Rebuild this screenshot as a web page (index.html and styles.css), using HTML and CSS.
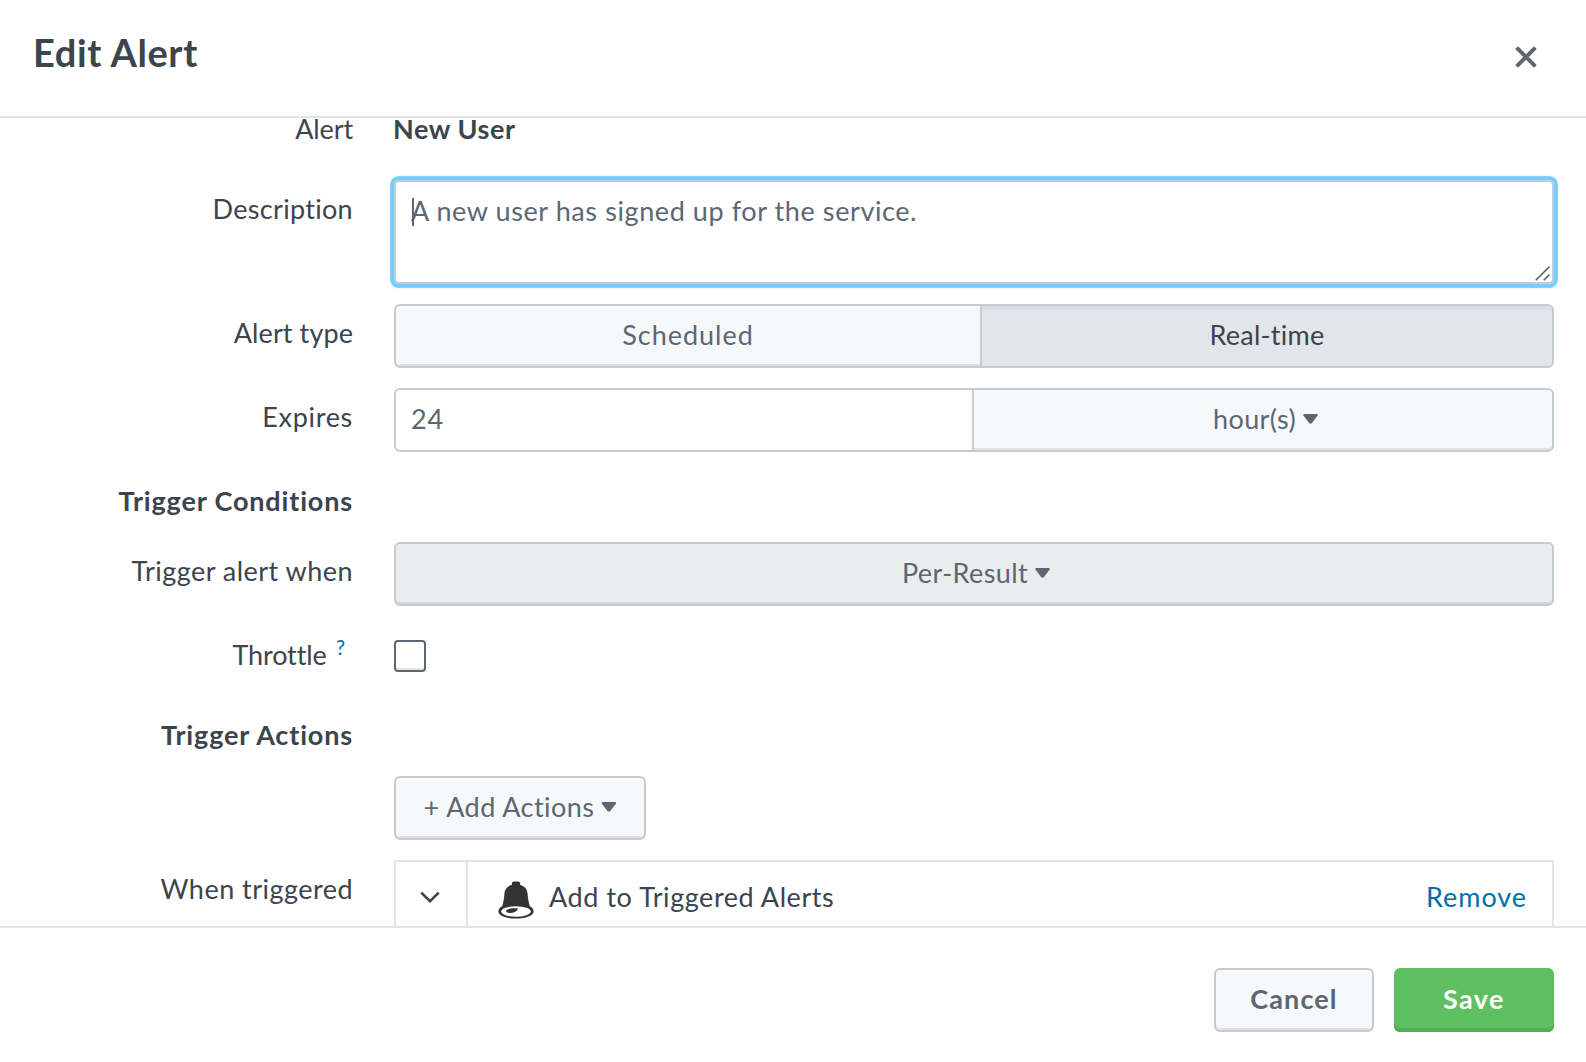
FILE: index.html
```
<!DOCTYPE html>
<html lang="en">
<head>
<meta charset="utf-8">
<title>Edit Alert</title>
<link rel="stylesheet" href="styles.css">
</head>
<body>
<div class="modal" role="dialog" aria-label="Edit Alert">
  <header class="modal-header">
    <h1 class="modal-title">Edit Alert</h1>
    <button class="close" aria-label="Close">
      <svg width="24" height="24" viewBox="0 0 24 24"><path d="M2.600 2.600 21.400 21.400M21.400 2.600 2.600 21.400" fill="none" stroke="#5c6773" stroke-width="4"/></svg>
    </button>
  </header>

  <main class="modal-body">
    <div class="row row-first">
      <span class="label ls-alert">Alert</span>
      <strong class="static-value">New User</strong>
    </div>
    <div class="row">
      <span class="label ls-description">Description</span>
      <div class="textarea" tabindex="0"><span class="caret"></span>A new user has signed up for the service.
        <svg class="grip" width="15" height="15" viewBox="0 0 15 15"><path d="M.7 14.3 14.3.7M8.7 14.3 14.3 8.7" fill="none" stroke="#555" stroke-width="1.5"/></svg>
      </div>
    </div>
    <div class="row">
      <span class="label ls-type">Alert type</span>
      <div class="group">
        <button class="btn btn-scheduled">Scheduled</button>
        <button class="btn btn-active">Real-time</button>
      </div>
    </div>
    <div class="row">
      <span class="label ls-expires">Expires</span>
      <div class="group">
        <div class="input">24</div>
        <button class="btn btn-unit">hour(s)<span class="arrow"></span></button>
      </div>
    </div>
    <div class="row row-heading">
      <strong class="label ls-conditions">Trigger Conditions</strong>
    </div>
    <div class="row">
      <span class="label ls-when">Trigger alert when</span>
      <button class="btn btn-disabled">Per-Result<span class="arrow"></span></button>
    </div>
    <div class="row row-text">
      <span class="label ls-throttle">Throttle<sup class="help">?</sup></span>
      <span class="checkbox" role="checkbox" aria-checked="false"></span>
    </div>
    <div class="row row-heading">
      <strong class="label ls-actions">Trigger Actions</strong>
    </div>
    <div class="row">
      <span class="label"></span>
      <button class="btn btn-add">+ Add Actions<span class="arrow"></span></button>
    </div>
    <div class="row">
      <span class="label ls-when">When triggered</span>
      <div class="action">
        <span class="expander">
          <svg width="20" height="12" viewBox="0 0 20 12"><path d="M1.3 1.6 10 10.1 18.7 1.6" fill="none" stroke="#3c444d" stroke-width="2.6"/></svg>
        </span>
        <svg class="bell" width="36" height="38" viewBox="0 0 36 38">
          <path fill="#333" d="M14 2.2Q14 .5 15.700.5h4.600Q22 .5 22 2.200V3.800Q28.500 5.500 29.500 12Q30.300 21 31.800 25.200Q35.600 27.300 35.600 30.500C35.600 34.700 28 37.600 18 37.600S.4 34.700.4 30.500Q.4 27.300 4.200 25.200Q5.700 21 6.500 12Q7.500 5.500 14 3.800Z"/>
          <ellipse cx="18" cy="30.500" rx="14.800" ry="5.200" fill="#fff"/>
          <path fill="#333" d="M20 27.600C14 26.800 8 28.200 8 30C8 31.900 12.500 32.400 15.500 31.600C18.300 30.700 19.600 29.300 20 27.600Z"/>
        </svg>
        <span class="action-name">Add to Triggered Alerts</span>
        <a class="remove">Remove</a>
      </div>
    </div>
  </main>

  <footer class="modal-footer">
    <button class="btn btn-cancel">Cancel</button>
    <button class="btn btn-save">Save</button>
  </footer>
</div>
</body>
</html>
```
FILE: styles.css
```
* {
  box-sizing: border-box;
}

body {
  margin: 0;
  background: #fff;
  color: #3c444d;
  font: 27px/40px Lato, "Liberation Sans", sans-serif;
  font-kerning: normal;
}

button {
  font: inherit;
  letter-spacing: inherit;
  cursor: pointer;
}

.modal {
  display: flex;
  flex-direction: column;
  width: 1586px;
  height: 1062px;
  overflow: hidden;
}

/* Header */
.modal-header {
  flex: none;
  display: flex;
  justify-content: space-between;
  height: 118px;
  padding: 27px 48px 0 33px;
  border-bottom: 2px solid #e1e6eb;
}

.modal-title {
  margin: 0;
  font-size: 38px;
  line-height: 50px;
  letter-spacing: 0.6px;
}

.close {
  display: flex;
  align-items: flex-start;
  height: 50px;
  padding: 18px 0 0;
  border: 0;
  background: none;
}

/* Scrolled form area */
.modal-body {
  flex: none;
  display: flex;
  flex-direction: column;
  gap: 20px;
  height: 808px;
  overflow: hidden;
}

.row {
  flex: none;
  display: grid;
  grid-template-columns: 353px 1160px;
  column-gap: 41px;
}

.row-text {
  height: 60px;
}

.row-heading {
  height: 50px;
}

.label {
  padding-top: 9px;
  text-align: right;
  white-space: nowrap;
}

.row-first {
  height: 42px;
  line-height: 22px;
}

.row-first .label {
  padding-top: 0;
}

.static-value {
  margin-left: -1px;
  letter-spacing: 0.55px;
}

.ls-alert { letter-spacing: -0.1px; }
.ls-description { letter-spacing: 0.31px; }
.ls-type { letter-spacing: 0.1px; }
.ls-expires { letter-spacing: 0.7px; }
.ls-conditions { letter-spacing: 0.85px; }
.ls-when { letter-spacing: 0.47px; }
.ls-throttle { letter-spacing: -0.1px; }
.ls-actions { letter-spacing: 0.85px; }

.help {
  margin: 0 8px 0 9px;
  color: #006eaa;
  font-size: 21px;
  line-height: 0;
  vertical-align: 10px;
}

/* Controls */
.textarea {
  position: relative;
  height: 104px;
  padding: 9px 15px;
  border: 2px solid #c3cbd4;
  border-radius: 5px;
  outline: none;
  box-shadow: 0 0 1px 3.6px #78cbfd;
  color: #5c6773;
  letter-spacing: 0.59px;
}

.caret {
  position: absolute;
  top: 16px;
  left: 16px;
  width: 2px;
  height: 28px;
  background: #5c6773;
}

.grip {
  position: absolute;
  right: 2px;
  bottom: 1px;
}

.group {
  display: flex;
}

.btn {
  display: flex;
  align-items: center;
  justify-content: center;
  height: 64px;
  padding: 0 0 2px;
  border: 2px solid #c3cbd4;
  border-radius: 6px;
  background: #f7f8fa;
  box-shadow: inset 0 -2px 0 #dfe2e4;
  color: #5c6773;
  white-space: nowrap;
}

.btn-scheduled {
  width: 586px;
  border-right: 0;
  border-radius: 6px 0 0 6px;
  letter-spacing: 0.99px;
}

.btn-active {
  width: 574px;
  border-radius: 0 6px 6px 0;
  background: #e1e6ea;
  box-shadow: inset 0 4px 0 #d9dfe8;
  color: #3c444d;
  letter-spacing: 0.26px;
}

.input {
  width: 578px;
  height: 64px;
  padding: 9px 15px;
  border: 2px solid #c3cbd4;
  border-right: 0;
  border-radius: 6px 0 0 6px;
  color: #5c6773;
  letter-spacing: 0.84px;
}

.btn-unit {
  width: 582px;
  padding-left: 5px;
  border-radius: 0 6px 6px 0;
  letter-spacing: 0.4px;
}

.btn-disabled {
  padding-left: 4px;
  background: #e9edee;
  box-shadow: inset 0 -2px 0 #d2d6d7;
  letter-spacing: 0.39px;
}

.arrow {
  width: 15px;
  height: 10px;
  margin-left: 7px;
  background: #5c6773;
  clip-path: polygon(6% 0, 94% 0, 100% 10%, 57% 95%, 43% 95%, 0 10%);
}

.checkbox {
  width: 32px;
  height: 32px;
  margin-top: 14px;
  border: 2px solid #5c6773;
  border-radius: 4px;
  box-shadow: inset 0 -2px 0 #e5e5e5;
}

.btn-add {
  width: 252px;
  letter-spacing: 0.45px;
}

/* Triggered action entry */
.action {
  display: flex;
  height: 66px;
  border: 2px solid #e1e6eb;
  border-bottom: 0;
}

.expander {
  width: 72px;
  padding: 29px 0 0 24px;
  border-right: 2px solid #e1e6eb;
  line-height: 0;
}

.bell {
  margin: 19px 0 0 30px;
}

.action-name {
  margin: 15px auto 0 15px;
  letter-spacing: 0.57px;
}

.remove {
  margin: 15px 25px 0 0;
  color: #006eaa;
  letter-spacing: 0.95px;
}

/* Footer */
.modal-footer {
  flex: none;
  display: flex;
  justify-content: flex-end;
  gap: 20px;
  height: 136px;
  padding: 40px 32px 0 0;
  border-top: 2px solid #e1e6eb;
}

.btn-cancel,
.btn-save {
  width: 160px;
  font-weight: 700;
  letter-spacing: 1.1px;
}

.btn-save {
  border: 0;
  background: #5fbf61;
  box-shadow: inset 0 -4px 0 #55ac57;
  color: #fff;
  letter-spacing: 1.39px;
}
```
